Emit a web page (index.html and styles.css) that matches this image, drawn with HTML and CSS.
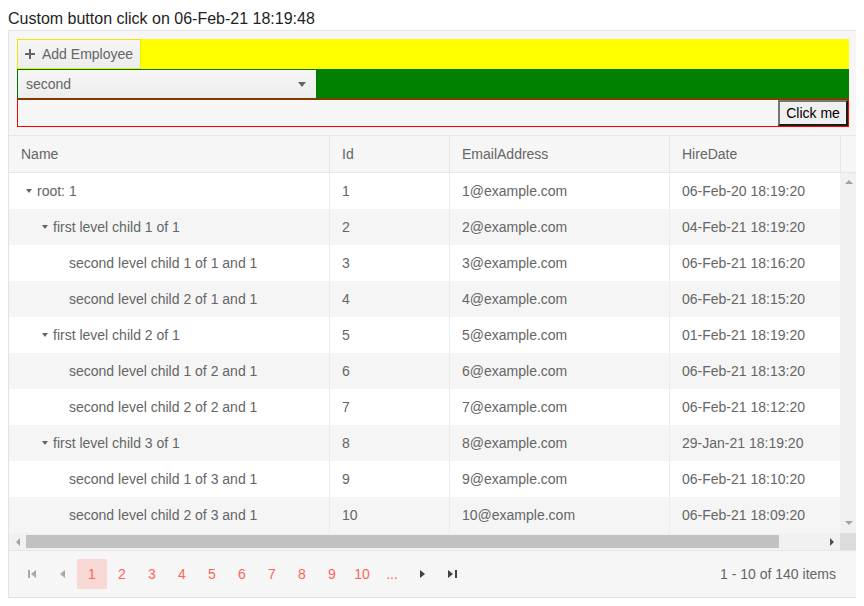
FILE: index.html
```html
<!DOCTYPE html>
<html lang="en">
<head>
  <meta charset="UTF-8" />
  <title>Employees</title>
  <link rel="stylesheet" href="styles.css">
</head>
<body>
  <p class="status">Custom button click on 06-Feb-21 18:19:48</p>

  <div class="grid">
    <!-- Toolbar -->
    <div class="toolbar">
      <div class="bar bar-yellow">
        <button class="add-btn">
          <svg width="10" height="10" viewBox="0 0 10 10"><rect x="4" y="0" width="2" height="10" fill="#656565"/><rect x="0" y="4" width="10" height="2" fill="#656565"/></svg>
          Add Employee
        </button>
      </div>
      <div class="bar bar-green">
        <div class="dropdown">
          <span>second</span>
          <span class="caret"></span>
        </div>
      </div>
      <div class="bar bar-red">
        <button class="click-btn">Click me</button>
      </div>
    </div>

    <!-- Header -->
    <div class="head">
      <div class="hcell">Name</div>
      <div class="hcell">Id</div>
      <div class="hcell">EmailAddress</div>
      <div class="hcell">HireDate</div>
      <div class="hcell"></div>
    </div>

    <!-- Rows -->
    <div class="body">
      <div class="rows">
        <div class="row">
          <div class="cell"><span class="tree-icon"><span class="caret small"></span></span>root: 1</div>
          <div class="cell">1</div>
          <div class="cell">1@example.com</div>
          <div class="cell">06-Feb-20 18:19:20</div>
        </div>
        <div class="row">
          <div class="cell"><span class="indent"></span><span class="tree-icon"><span class="caret small"></span></span>first level child 1 of 1</div>
          <div class="cell">2</div>
          <div class="cell">2@example.com</div>
          <div class="cell">04-Feb-21 18:19:20</div>
        </div>
        <div class="row">
          <div class="cell"><span class="indent"></span><span class="indent"></span><span class="tree-icon"></span>second level child 1 of 1 and 1</div>
          <div class="cell">3</div>
          <div class="cell">3@example.com</div>
          <div class="cell">06-Feb-21 18:16:20</div>
        </div>
        <div class="row">
          <div class="cell"><span class="indent"></span><span class="indent"></span><span class="tree-icon"></span>second level child 2 of 1 and 1</div>
          <div class="cell">4</div>
          <div class="cell">4@example.com</div>
          <div class="cell">06-Feb-21 18:15:20</div>
        </div>
        <div class="row">
          <div class="cell"><span class="indent"></span><span class="tree-icon"><span class="caret small"></span></span>first level child 2 of 1</div>
          <div class="cell">5</div>
          <div class="cell">5@example.com</div>
          <div class="cell">01-Feb-21 18:19:20</div>
        </div>
        <div class="row">
          <div class="cell"><span class="indent"></span><span class="indent"></span><span class="tree-icon"></span>second level child 1 of 2 and 1</div>
          <div class="cell">6</div>
          <div class="cell">6@example.com</div>
          <div class="cell">06-Feb-21 18:13:20</div>
        </div>
        <div class="row">
          <div class="cell"><span class="indent"></span><span class="indent"></span><span class="tree-icon"></span>second level child 2 of 2 and 1</div>
          <div class="cell">7</div>
          <div class="cell">7@example.com</div>
          <div class="cell">06-Feb-21 18:12:20</div>
        </div>
        <div class="row">
          <div class="cell"><span class="indent"></span><span class="tree-icon"><span class="caret small"></span></span>first level child 3 of 1</div>
          <div class="cell">8</div>
          <div class="cell">8@example.com</div>
          <div class="cell">29-Jan-21 18:19:20</div>
        </div>
        <div class="row">
          <div class="cell"><span class="indent"></span><span class="indent"></span><span class="tree-icon"></span>second level child 1 of 3 and 1</div>
          <div class="cell">9</div>
          <div class="cell">9@example.com</div>
          <div class="cell">06-Feb-21 18:10:20</div>
        </div>
        <div class="row">
          <div class="cell"><span class="indent"></span><span class="indent"></span><span class="tree-icon"></span>second level child 2 of 3 and 1</div>
          <div class="cell">10</div>
          <div class="cell">10@example.com</div>
          <div class="cell">06-Feb-21 18:09:20</div>
        </div>
      </div>
      <div class="vscroll">
        <span class="arrow arrow-up"></span>
        <span class="arrow arrow-down"></span>
      </div>
    </div>

    <!-- Horizontal scrollbar -->
    <div class="hscroll">
      <div class="hs-btn"><span class="arrow arrow-left"></span></div>
      <div class="track"><div class="thumb"></div></div>
      <div class="hs-btn"><span class="arrow arrow-right active"></span></div>
      <div class="corner"></div>
    </div>

    <!-- Pager -->
    <div class="pager">
      <div class="pages">
        <span class="pg">
          <svg width="9" height="8" viewBox="0 0 9 8"><rect x="0" y="0" width="2" height="8" fill="#a8a8a8"/><polygon points="8,0 3,4 8,8" fill="#a8a8a8"/></svg>
        </span>
        <span class="pg">
          <svg width="5" height="8" viewBox="0 0 5 8"><polygon points="5,0 0,4 5,8" fill="#a8a8a8"/></svg>
        </span>
        <span class="pg selected">1</span>
        <span class="pg">2</span>
        <span class="pg">3</span>
        <span class="pg">4</span>
        <span class="pg">5</span>
        <span class="pg">6</span>
        <span class="pg">7</span>
        <span class="pg">8</span>
        <span class="pg">9</span>
        <span class="pg">10</span>
        <span class="pg">...</span>
        <span class="pg">
          <svg width="5" height="8" viewBox="0 0 5 8"><polygon points="0,0 5,4 0,8" fill="#424242"/></svg>
        </span>
        <span class="pg">
          <svg width="9" height="8" viewBox="0 0 9 8"><polygon points="0,0 5,4 0,8" fill="#424242"/><rect x="7" y="0" width="2" height="8" fill="#424242"/></svg>
        </span>
      </div>
      <div class="pager-info">1 - 10 of 140 items</div>
    </div>
  </div>
</body>
</html>
```

FILE: styles.css
```css
body {
  margin: 8px;
  font-family: 'Liberation Sans', Arial, sans-serif;
  font-size: 14px;
  color: #656565;
}

.status {
  margin: 0;
  height: 22px;
  line-height: 22px;
  font-size: 16px;
  color: #1e1e1e;
}

.grid {
  width: 850px;
  box-sizing: border-box;
  border: 1px solid #e3e3e3;
  background: #fff;
}

/* toolbar */
.toolbar {
  padding: 8px;
  background: #f6f6f6;
  border-bottom: 1px solid #e6e6e6;
}

.bar {
  height: 30px;
  display: flex;
}

.bar-yellow {
  background: #ffff00;
}

.bar-green {
  background: #008000;
}

.bar-red {
  height: 28px;
  box-sizing: border-box;
  border: 1px solid #ff0000;
  justify-content: flex-end;
}

.add-btn {
  height: 30px;
  box-sizing: border-box;
  border: 1px solid #ebeb00;
  background: linear-gradient(#f6f6f6, #ededed);
  padding: 0 7px 0 7px;
  display: flex;
  align-items: center;
  gap: 7px;
  font: 14px 'Liberation Sans', Arial, sans-serif;
  color: #656565;
}

.dropdown {
  width: 300px;
  height: 30px;
  box-sizing: border-box;
  border: 1px solid #007600;
  background: linear-gradient(#f6f6f6, #ededed);
  display: flex;
  align-items: center;
  justify-content: space-between;
  padding: 0 10px 0 8px;
}

.caret {
  width: 0;
  height: 0;
  border-left: 4px solid transparent;
  border-right: 4px solid transparent;
  border-top: 5px solid #656565;
}

.caret.small {
  border-left-width: 3px;
  border-right-width: 3px;
  border-top-width: 4px;
}

.click-btn {
  width: 70px;
  height: 26px;
  padding: 0;
  border: 2px solid;
  border-color: #767676 #1a1a1a #1a1a1a #767676;
  background: #efefef;
  font: 14px 'Liberation Sans', Arial, sans-serif;
  color: #000;
}

/* header + rows */
.head {
  display: grid;
  grid-template-columns: 320px 120px 220px 171px 17px;
  background: #f6f6f6;
  border-bottom: 1px solid #e6e6e6;
}

.hcell {
  height: 36px;
  line-height: 36px;
  padding-left: 12px;
  box-sizing: border-box;
  border-left: 1px solid #e6e6e6;
}

.hcell:first-child {
  border-left: 0;
}

.body {
  display: flex;
}

.rows {
  width: 831px;
}

.row {
  display: grid;
  grid-template-columns: 320px 120px 220px 171px;
  height: 36px;
}

.row:nth-child(even) {
  background: #f5f5f5;
}

.cell {
  display: flex;
  align-items: center;
  padding-left: 12px;
  box-sizing: border-box;
  border-left: 1px solid #ebebeb;
  white-space: nowrap;
  overflow: hidden;
}

.cell:first-child {
  border-left: 0;
}

.indent, .tree-icon {
  display: inline-flex;
  width: 16px;
  height: 16px;
  flex: none;
  align-items: center;
  justify-content: center;
}

/* scrollbars */
.vscroll {
  width: 17px;
  background: #f1f1f1;
  display: flex;
  flex-direction: column;
  justify-content: space-between;
  align-items: center;
  padding: 7px 0 8px;
  box-sizing: border-box;
}

.arrow {
  width: 0;
  height: 0;
}

.arrow-up {
  border-left: 4px solid transparent;
  border-right: 4px solid transparent;
  border-bottom: 4px solid #a3a3a3;
}

.arrow-down {
  border-left: 4px solid transparent;
  border-right: 4px solid transparent;
  border-top: 4px solid #a3a3a3;
}

.arrow-left {
  border-top: 4px solid transparent;
  border-bottom: 4px solid transparent;
  border-right: 4px solid #a3a3a3;
}

.arrow-right {
  border-top: 4px solid transparent;
  border-bottom: 4px solid transparent;
  border-left: 4px solid #505050;
}

.hscroll {
  display: flex;
  height: 17px;
  background: #f1f1f1;
}

.hs-btn {
  width: 17px;
  display: flex;
  align-items: center;
  justify-content: center;
}

.track {
  flex: 1;
  padding: 2px 0;
  box-sizing: border-box;
}

.thumb {
  width: 753px;
  height: 13px;
  background: #c1c1c1;
}

.corner {
  width: 17px;
  background: #dcdcdc;
}

/* pager */
.pager {
  display: flex;
  justify-content: space-between;
  align-items: center;
  padding: 8px 21px 8px 8px;
  background: #f6f6f6;
  border-top: 1px solid #e6e6e6;
}

.pages {
  display: flex;
}

.pg {
  width: 30px;
  height: 30px;
  display: flex;
  align-items: center;
  justify-content: center;
  color: #ff6358;
}

.pg.selected {
  background: #f8d9d6;
}
```
